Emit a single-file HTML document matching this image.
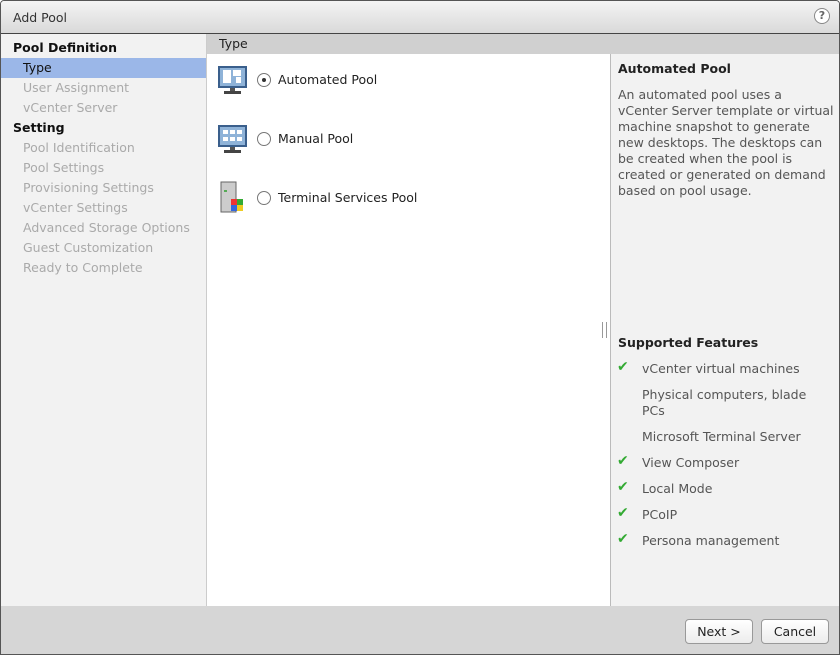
<!DOCTYPE html>
<html><head><style>
*{margin:0;padding:0;box-sizing:border-box}
body{width:840px;height:655px;font-family:"DejaVu Sans","Liberation Sans",sans-serif;font-size:12.5px;color:#222;background:#fff;position:relative;overflow:hidden}
.frame{position:absolute;left:0;top:0;width:840px;height:655px;border:1px solid #555;border-radius:4px 4px 0 0;overflow:hidden}
.title{position:absolute;left:0;top:0;width:840px;height:33px;background:linear-gradient(#f4f4f4,#d9d9d9);border-bottom:1px solid #444}
.title span{position:absolute;left:12px;top:9px;color:#333}
.help{position:absolute;right:11px;top:7px;width:16px;height:16px;border:1px solid #888;border-radius:50%;background:#fff;font-size:11px;text-align:center;line-height:14px;color:#666;font-weight:bold}
.left{position:absolute;left:0;top:33px;width:206px;height:572px;background:#f2f2f2;border-right:1px solid #ccc}
.left div{height:20px;line-height:20px;padding-left:22px;color:#aaa;white-space:nowrap}
.left div.h{padding-left:12px;color:#111;font-weight:bold}
.left div.sel{background:#9bb7e8;color:#111}
.hdr{position:absolute;left:206px;top:33px;width:634px;height:20px;background:#d0d0d0;padding-left:12px;line-height:19px;color:#222}
.center{position:absolute;left:206px;top:53px;width:403px;height:552px;background:#fff}
.right{position:absolute;left:609px;top:53px;width:231px;height:552px;background:#f2f2f2;border-left:1px solid #bbb}
.opt{position:absolute;left:10px;height:32px}
.opt .rad{position:absolute;left:40px;top:10px;width:14px;height:14px;border:1px solid #777;border-radius:50%;background:#fff}
.opt .lbl{position:absolute;left:61px;top:9px;white-space:nowrap}
.right .t{position:absolute;left:7px;top:7px;font-weight:bold}
.right .p{position:absolute;left:7px;top:33px;line-height:16px;color:#555;white-space:nowrap}
.f{position:absolute;left:31px;color:#555;line-height:16px;white-space:nowrap}
.ck{position:absolute;left:6px;color:#3a3;font-weight:bold;font-size:14px}
.footer{position:absolute;left:0;top:605px;width:840px;height:50px;background:#d6d6d6}
.btn{position:absolute;top:13px;height:25px;border:1px solid #999;border-radius:4px;background:linear-gradient(#fff,#ececec);text-align:center;line-height:23px;color:#222}
</style></head><body><div class="frame">
<div class="title"><span>Add Pool</span><div class="help">?</div></div>
<div class="left">
<div class="h" style="margin-top:4px">Pool Definition</div>
<div class="sel">Type</div>
<div>User Assignment</div>
<div>vCenter Server</div>
<div class="h">Setting</div>
<div>Pool Identification</div>
<div>Pool Settings</div>
<div>Provisioning Settings</div>
<div>vCenter Settings</div>
<div>Advanced Storage Options</div>
<div>Guest Customization</div>
<div>Ready to Complete</div>
</div>
<div class="hdr">Type</div>
<div class="center">
<div class="opt" style="top:9px"><svg width="32" height="32" style="position:absolute;left:0;top:2px"><rect x="1" y="1" width="29" height="22" fill="#3a5f8c"/><rect x="3" y="3" width="25" height="18" fill="#8fb3d8"/><rect x="6" y="5" width="8" height="13" fill="#fff"/><rect x="16" y="5" width="8" height="6" fill="#fff"/><rect x="19" y="12" width="5" height="6" fill="#fff"/><rect x="13" y="23" width="5" height="3" fill="#555"/><rect x="7" y="26" width="17" height="3" fill="#444"/></svg><div class="rad"><div style="width:4px;height:4px;background:#333;border-radius:50%;margin:4px"></div></div><div class="lbl">Automated Pool</div></div>
<div class="opt" style="top:68px"><svg width="32" height="32" style="position:absolute;left:0;top:2px"><rect x="1" y="1" width="29" height="22" fill="#3a5f8c"/><rect x="3" y="3" width="25" height="18" fill="#8fb3d8"/><g fill="#fff"><rect x="6" y="6" width="5" height="4"/><rect x="13" y="6" width="5" height="4"/><rect x="20" y="6" width="5" height="4"/><rect x="6" y="13" width="5" height="4"/><rect x="13" y="13" width="5" height="4"/><rect x="20" y="13" width="5" height="4"/></g><rect x="13" y="23" width="5" height="3" fill="#555"/><rect x="7" y="26" width="17" height="3" fill="#444"/></svg><div class="rad"></div><div class="lbl">Manual Pool</div></div>
<div class="opt" style="top:127px"><svg width="32" height="32" style="position:absolute;left:0;top:0"><rect x="4" y="1" width="15" height="30" fill="#ccc" stroke="#666"/><rect x="7" y="9" width="3" height="2" fill="#5a5"/><rect x="14" y="18" width="6" height="6" fill="#e33"/><rect x="20" y="18" width="6" height="6" fill="#3a3"/><rect x="14" y="24" width="6" height="6" fill="#36d"/><rect x="20" y="24" width="6" height="6" fill="#ec2"/></svg><div class="rad"></div><div class="lbl">Terminal Services Pool</div></div>
<div style="position:absolute;left:395px;top:268px;width:5px;height:16px;border-left:1px solid #999;border-right:1px solid #999"></div>
</div>
<div class="right">
<div class="t">Automated Pool</div>
<div class="p">An automated pool uses a<br>vCenter Server template or virtual<br>machine snapshot to generate<br>new desktops. The desktops can<br>be created when the pool is<br>created or generated on demand<br>based on pool usage.</div>
<div class="t" style="top:281px">Supported Features</div>
<div class="ck" style="top:305px">✔</div><div class="f" style="top:307px">vCenter virtual machines</div>
<div class="f" style="top:333px">Physical computers, blade<br>PCs</div>
<div class="f" style="top:375px">Microsoft Terminal Server</div>
<div class="ck" style="top:399px">✔</div><div class="f" style="top:401px">View Composer</div>
<div class="ck" style="top:425px">✔</div><div class="f" style="top:427px">Local Mode</div>
<div class="ck" style="top:451px">✔</div><div class="f" style="top:453px">PCoIP</div>
<div class="ck" style="top:477px">✔</div><div class="f" style="top:479px">Persona management</div>
</div>
<div class="footer">
<div class="btn" style="left:684px;width:68px">Next &gt;</div>
<div class="btn" style="left:760px;width:68px">Cancel</div>
</div>
</div></body></html>
